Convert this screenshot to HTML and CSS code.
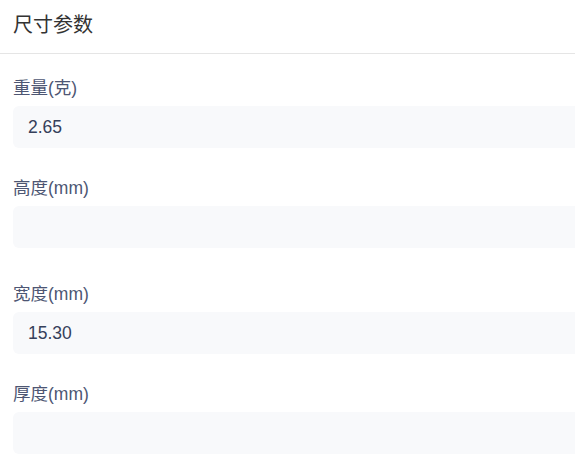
FILE: index.html
```html
<!DOCTYPE html>
<html lang="zh-CN">
<head>
    <meta charset="UTF-8">
    <meta name="viewport" content="width=device-width, initial-scale=1.0">
    <title>尺寸参数</title>
    <link rel="stylesheet" href="styles.css">
</head>
<body>
    <div class="panel">
        <div class="panel-header">
            <h2>尺寸参数</h2>
        </div>

        <div class="panel-body">
            <div class="field">
                <label for="weight">重量(克)</label>
                <input id="weight" type="text" value="2.65">
            </div>

            <div class="field">
                <label for="height">高度(mm)</label>
                <input id="height" type="text" value="">
            </div>

            <div class="field field-spaced">
                <label for="width">宽度(mm)</label>
                <input id="width" type="text" value="15.30">
            </div>

            <div class="field">
                <label for="thickness">厚度(mm)</label>
                <input id="thickness" type="text" value="">
            </div>
        </div>
    </div>
</body>
</html>
```

FILE: styles.css
```css
html, body {
    margin: 0;
    padding: 0;
    background: #ffffff;
    overflow: hidden;
}
body {
    font-family: "Liberation Sans", "Noto Sans CJK SC", sans-serif;
}
.panel {
    width: 600px;
}
.panel-header {
    height: 53px;
    padding: 0 13px;
    border-bottom: 1px solid #e5e5e5;
    display: flex;
    align-items: center;
}
.panel-header h2 {
    margin: 0 0 6px;
    font-size: 20px;
    font-weight: normal;
    color: #333333;
}
.panel-body {
    padding: 22px 0 0 13px;
    display: flex;
    flex-direction: column;
    gap: 28px;
}
.field {
    display: flex;
    flex-direction: column;
    gap: 6px;
}
.field-spaced {
    margin-top: 6px;
}
.field label {
    font-size: 17.5px;
    line-height: 24px;
    color: #4d5673;
}
.field input {
    box-sizing: border-box;
    height: 42px;
    padding: 0 15px;
    border: none;
    border-radius: 6px;
    background: #f8f9fb;
    font-family: inherit;
    font-size: 17.5px;
    color: #35405a;
    outline: none;
}
```
